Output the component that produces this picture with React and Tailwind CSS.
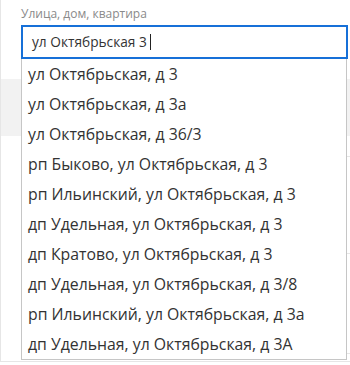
export default function App() {
  const items = [
    "ул Октябрьская, д 3",
    "ул Октябрьская, д 3а",
    "ул Октябрьская, д 36/3",
    "рп Быково, ул Октябрьская, д 3",
    "рп Ильинский, ул Октябрьская, д 3",
    "дп Удельная, ул Октябрьская, д 3",
    "дп Кратово, ул Октябрьская, д 3",
    "дп Удельная, ул Октябрьская, д 3/8",
    "рп Ильинский, ул Октябрьская, д 3а",
    "дп Удельная, ул Октябрьская, д 3А",
  ];
  return (
    <div className="relative w-[350px] h-[365px] bg-white overflow-hidden font-['Open_Sans',sans-serif]">
      <div className="h-[362px] border-l border-b border-[#e6e6e6]">
        <div className="pl-[20px] pt-[5px] text-[12px] leading-[17px] text-[#8a8a8a]">
          Улица, дом, квартира
        </div>
        <div className="ml-[20px] mt-[3px] w-[327px] h-[34px] border-2 border-[#1670d8] flex items-center pl-[9px] text-[13.7px] text-[#333]">
          ул Октябрьская 3&nbsp;<span className="inline-block w-[1px] h-[16px] bg-[#222]" />
        </div>
        <div className="mt-[20px] h-[57px] bg-[#f2f2f2]" />
        <div className="h-[20px]" />
        <div className="ml-[300px] border-t border-[#e6e6e6] h-[97px]" />
        <div className="ml-[300px] border-t border-[#e6e6e6] h-[100px]" />
        <div className="ml-[300px] border-t border-[#e6e6e6]" />
      </div>
      <div className="absolute left-[21px] top-[59px] w-[326px] bg-white border-x border-b border-[#c6c6c6] flex flex-col">
        {items.map((t) => (
          <div key={t} className="h-[30px] flex items-center pl-[6px] pt-[2px] text-[15.8px] text-[#333] whitespace-nowrap">
            {t}
          </div>
        ))}
      </div>
    </div>
  );
}
